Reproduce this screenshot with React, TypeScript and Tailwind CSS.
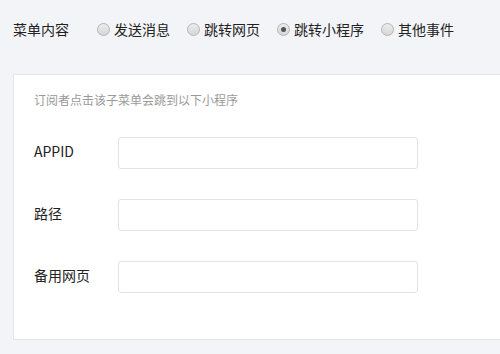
import React from "react";

const font = { fontFamily: '"Noto Sans CJK SC", "Noto Sans", sans-serif' };

function Radio({ label, checked }: { label: string; checked?: boolean }) {
  return (
    <div className="flex items-center">
      <span className="w-[13px] h-[13px] rounded-full border border-[#b4b4b4] bg-gradient-to-b from-[#ececec] to-[#d6d6d6] flex items-center justify-center">
        {checked && <span className="w-[5px] h-[5px] rounded-full bg-[#555]" />}
      </span>
      <span className="ml-[4px] text-[14px] leading-[20px] text-[#222]">{label}</span>
    </div>
  );
}

function Row({ label }: { label: string }) {
  return (
    <div className="flex items-center">
      <span className="w-[84px] text-[14px] leading-[20px] text-[#222] mb-[4px]">{label}</span>
      <div className="w-[300px] h-[32px] rounded-[3px] border border-[#e3e3e3] bg-white" />
    </div>
  );
}

export default function App() {
  return (
    <div className="w-[500px] h-[354px] bg-[#f3f4f8] overflow-hidden pl-[13px] pt-[19px]" style={font}>
      <div className="flex items-center h-[20px]">
        <span className="text-[14px] leading-[20px] text-[#222] w-[84px]">菜单内容</span>
        <div className="flex items-center gap-[17px]">
          <Radio label="发送消息" />
          <Radio label="跳转网页" />
          <Radio label="跳转小程序" checked />
          <Radio label="其他事件" />
        </div>
      </div>
      <div className="mt-[35px] w-[500px] h-[266px] bg-white border border-[#e4e5ea] pl-[20px] pt-[16px]">
        <div className="text-[12px] leading-[18px] text-[#9a9a9a]">订阅者点击该子菜单会跳到以下小程序</div>
        <div className="mt-[28px] flex flex-col gap-[30px]">
          <Row label="APPID" />
          <Row label="路径" />
          <Row label="备用网页" />
        </div>
      </div>
    </div>
  );
}
